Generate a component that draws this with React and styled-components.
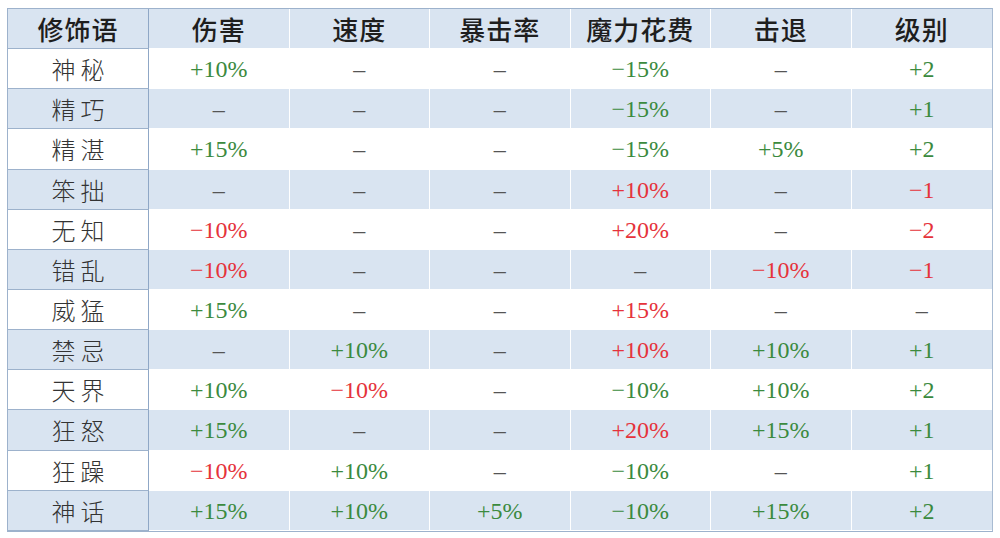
import React from "react"
import styled, { createGlobalStyle } from "styled-components"

const GlobalStyle = createGlobalStyle`
  body {
    margin: 0;
    background: #fff;
  }
`

const headers = ["修饰语", "伤害", "速度", "暴击率", "魔力花费", "击退", "级别"]

// g = 绿色, r = 红色, 空字符串 = 横线
const rows = [
  ["神秘", "+10%:g", "", "", "−15%:g", "", "+2:g"],
  ["精巧", "", "", "", "−15%:g", "", "+1:g"],
  ["精湛", "+15%:g", "", "", "−15%:g", "+5%:g", "+2:g"],
  ["笨拙", "", "", "", "+10%:r", "", "−1:r"],
  ["无知", "−10%:r", "", "", "+20%:r", "", "−2:r"],
  ["错乱", "−10%:r", "", "", "", "−10%:r", "−1:r"],
  ["威猛", "+15%:g", "", "", "+15%:r", "", ""],
  ["禁忌", "", "+10%:g", "", "+10%:r", "+10%:g", "+1:g"],
  ["天界", "+10%:g", "−10%:r", "", "−10%:g", "+10%:g", "+2:g"],
  ["狂怒", "+15%:g", "", "", "+20%:r", "+15%:g", "+1:g"],
  ["狂躁", "−10%:r", "+10%:g", "", "−10%:g", "", "+1:g"],
  ["神话", "+15%:g", "+10%:g", "+5%:g", "−10%:g", "+15%:g", "+2:g"],
]

const colors = { g: "#3b8a3e", r: "#e5333b" }

const App = () => {
  return (
    <Page>
      <GlobalStyle />
      <Table>
        {headers.map((h, i) => (
          <HeadCell key={h} first={i === 0}>{h}</HeadCell>
        ))}
        {rows.map((row, r) =>
          row.map((cell, c) => {
            const shaded = r % 2 === 1
            if (c === 0) {
              return <LabelCell key={r + "-" + c} shaded={shaded}>{cell}</LabelCell>
            }
            const [text, tone] = cell.split(":")
            return (
              <ValueCell key={r + "-" + c} shaded={shaded} tone={tone ? colors[tone] : "#555"}>
                {text || "–"}
              </ValueCell>
            )
          })
        )}
      </Table>
    </Page>
  )
}

export default App

const Page = styled.div`
  padding: 8px 7px 0 7px;
  width: 1000px;
  box-sizing: border-box;
`

const Table = styled.div`
  display: grid;
  grid-template-columns: 141px repeat(6, 1fr);
  grid-auto-rows: 40.15px;
  border: 1px solid #9db2cc;
  border-right-color: #a8bbd2;
  width: 986px;
  box-sizing: border-box;
`

const Cell = styled.div`
  display: flex;
  align-items: center;
  justify-content: center;
  box-sizing: border-box;
  border-right: 1px solid #fff;
  border-bottom: 1px solid #fff;
  &:nth-child(7n) {
    border-right: none;
  }
`

const HeadCell = styled(Cell)`
  background: #d9e4f1;
  font-family: "Noto Sans CJK SC", sans-serif;
  font-weight: 500;
  font-size: 26px;
  color: #1e1e1e;
  letter-spacing: 1px;
  border-right-color: ${(p) => (p.first ? "#8fa7c6" : "#fff")};
  border-bottom-color: ${(p) => (p.first ? "#9db2cc" : "#fff")};
`

const LabelCell = styled(Cell)`
  background: ${(p) => (p.shaded ? "#d9e4f1" : "#fff")};
  font-family: "Noto Sans CJK SC", sans-serif;
  font-weight: 300;
  font-size: 24px;
  color: #333;
  letter-spacing: 5px;
  padding-left: 5px;
  border-right-color: #8fa7c6;
  border-bottom-color: #9db2cc;
`

const ValueCell = styled(Cell)`
  background: ${(p) => (p.shaded ? "#d9e4f1" : "#fff")};
  font-family: "Liberation Serif", "Times New Roman", serif;
  font-size: 24px;
  padding-top: 2px;
  color: ${(p) => p.tone};
`
